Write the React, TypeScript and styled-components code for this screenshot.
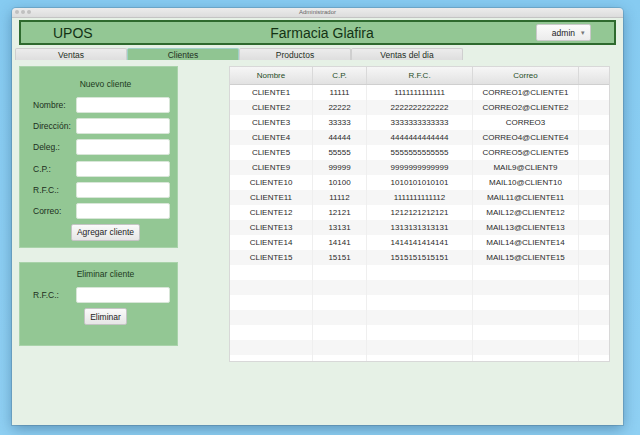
import React from "react";
import styled, { createGlobalStyle } from "styled-components";

const GlobalStyle = createGlobalStyle`
  html, body {
    margin: 0;
    padding: 0;
    height: 100%;
  }
  body {
    background: linear-gradient(180deg, #86cbf1 0%, #8fd0f3 100%);
    font-family: "Liberation Sans", Arial, sans-serif;
    overflow: hidden;
  }
  #root {
    height: 100%;
  }
`;

type Cliente = {
  nombre: string;
  cp: string;
  rfc: string;
  correo: string;
};

const clientes: Cliente[] = [
  { nombre: "CLIENTE1", cp: "11111", rfc: "1111111111111", correo: "CORREO1@CLIENTE1" },
  { nombre: "CLIENTE2", cp: "22222", rfc: "2222222222222", correo: "CORREO2@CLIENTE2" },
  { nombre: "CLIENTE3", cp: "33333", rfc: "3333333333333", correo: "CORREO3" },
  { nombre: "CLIENTE4", cp: "44444", rfc: "4444444444444", correo: "CORREO4@CLIENTE4" },
  { nombre: "CLIENTE5", cp: "55555", rfc: "5555555555555", correo: "CORREO5@CLIENTE5" },
  { nombre: "CLIENTE9", cp: "99999", rfc: "9999999999999", correo: "MAIL9@CLIENT9" },
  { nombre: "CLIENTE10", cp: "10100", rfc: "1010101010101", correo: "MAIL10@CLIENT10" },
  { nombre: "CLIENTE11", cp: "11112", rfc: "1111111111112", correo: "MAIL11@CLIENTE11" },
  { nombre: "CLIENTE12", cp: "12121", rfc: "1212121212121", correo: "MAIL12@CLIENTE12" },
  { nombre: "CLIENTE13", cp: "13131", rfc: "1313131313131", correo: "MAIL13@CLIENTE13" },
  { nombre: "CLIENTE14", cp: "14141", rfc: "1414141414141", correo: "MAIL14@CLIENTE14" },
  { nombre: "CLIENTE15", cp: "15151", rfc: "1515151515151", correo: "MAIL15@CLIENTE15" },
];

const tabs = ["Ventas", "Clientes", "Productos", "Ventas del dia"];
const campos = ["Nombre:", "Dirección:", "Deleg.:", "C.P.:", "R.F.C.:", "Correo:"];

export default function App() {
  return (
    <>
      <GlobalStyle />
      <Desktop>
        <Window>
          <TitleBar>
            <Dots>
              <Dot />
              <Dot />
              <Dot />
            </Dots>
            <WindowTitle>Administrador</WindowTitle>
          </TitleBar>
          <Content>
            <HeaderBar>
              <Brand>UPOS</Brand>
              <StoreName>Farmacia Glafira</StoreName>
              <UserButton>
                <span>admin</span>
                <Caret>▾</Caret>
              </UserButton>
            </HeaderBar>

            <TabRow>
              {tabs.map((t) => (
                <Tab key={t} $active={t === "Clientes"}>
                  {t}
                </Tab>
              ))}
            </TabRow>

            <Main>
              <SideColumn>
                <Panel $height={182} $top={12}>
                  <PanelTitle>Nuevo cliente</PanelTitle>
                  <FormGrid>
                    {campos.map((c) => (
                      <React.Fragment key={c}>
                        <FieldLabel>{c}</FieldLabel>
                        <TextInput />
                      </React.Fragment>
                    ))}
                  </FormGrid>
                  <ActionButton>Agregar cliente</ActionButton>
                </Panel>

                <Panel $height={84} $top={6}>
                  <PanelTitle>Eliminar cliente</PanelTitle>
                  <FormGrid>
                    <FieldLabel>R.F.C.:</FieldLabel>
                    <TextInput />
                  </FormGrid>
                  <ActionButton>Eliminar</ActionButton>
                </Panel>
              </SideColumn>

              <TableBox>
                <HeadRow>
                  <HeadCell>Nombre</HeadCell>
                  <HeadCell>C.P.</HeadCell>
                  <HeadCell>R.F.C.</HeadCell>
                  <HeadCell>Correo</HeadCell>
                  <HeadCell />
                </HeadRow>
                {clientes.map((c, i) => (
                  <Row key={c.nombre} $odd={i % 2 === 1}>
                    <Cell>{c.nombre}</Cell>
                    <Cell>{c.cp}</Cell>
                    <Cell>{c.rfc}</Cell>
                    <Cell>{c.correo}</Cell>
                    <Cell />
                  </Row>
                ))}
                {Array.from({ length: 7 }).map((_, i) => (
                  <Row key={"e" + i} $odd={(clientes.length + i) % 2 === 1}>
                    <Cell />
                    <Cell />
                    <Cell />
                    <Cell />
                    <Cell />
                  </Row>
                ))}
              </TableBox>
            </Main>
          </Content>
        </Window>
      </Desktop>
    </>
  );
}

const Desktop = styled.div`
  height: 100%;
  padding: 8px 0 0 12px;
  box-sizing: border-box;
`;

const Window = styled.div`
  width: 611px;
  height: 417px;
  display: flex;
  flex-direction: column;
  border-radius: 4px 4px 0 0;
  overflow: hidden;
  box-shadow: 0 4px 14px rgba(0, 40, 80, 0.35), 0 0 0 1px rgba(0, 0, 0, 0.12);
`;

const TitleBar = styled.div`
  height: 9px;
  flex: none;
  position: relative;
  display: flex;
  align-items: center;
  justify-content: center;
  background: linear-gradient(180deg, #ececec 0%, #dcdcdc 100%);
  border-bottom: 1px solid #c4c4c4;
`;

const Dots = styled.div`
  position: absolute;
  left: 3px;
  top: 2px;
  display: flex;
  gap: 2px;
`;

const Dot = styled.span`
  width: 4px;
  height: 4px;
  border-radius: 50%;
  background: #c0c0c0;
`;

const WindowTitle = styled.span`
  font-size: 6px;
  color: #666;
  line-height: 9px;
`;

const Content = styled.div`
  flex: 1;
  background: #e6f1e6;
  padding-top: 2px;
  display: flex;
  flex-direction: column;
`;

const HeaderBar = styled.div`
  margin: 0 7px;
  height: 25px;
  box-sizing: border-box;
  border: 2px solid #2e6a2e;
  background: #93c794;
  display: grid;
  grid-template-columns: 1fr auto 1fr;
  align-items: center;
  padding: 0 23px 0 32px;
`;

const Brand = styled.div`
  font-size: 14px;
  color: #143314;
  justify-self: start;
`;

const StoreName = styled.div`
  font-size: 14px;
  color: #143314;
`;

const UserButton = styled.div`
  justify-self: end;
  width: 55px;
  height: 17px;
  box-sizing: border-box;
  border: 1px solid #c9c9c9;
  border-radius: 2px;
  background: linear-gradient(180deg, #fbfbfb 0%, #ececec 100%);
  display: flex;
  align-items: center;
  justify-content: flex-end;
  gap: 6px;
  padding-right: 5px;
  font-size: 8.5px;
  color: #222;
`;

const Caret = styled.span`
  font-size: 7px;
  color: #777;
`;

const TabRow = styled.div`
  display: flex;
  margin: 3px 0 0 3px;
  height: 12px;
`;

const Tab = styled.div<{ $active?: boolean }>`
  width: 112px;
  box-sizing: border-box;
  display: flex;
  align-items: center;
  justify-content: center;
  font-size: 8.5px;
  color: #1f2f1f;
  border: 1px solid ${(p) => (p.$active ? "#9fd0c6" : "#cfcfcf")};
  border-bottom: none;
  border-radius: 2px 2px 0 0;
  background: ${(p) =>
    p.$active ? "#90c592" : "linear-gradient(180deg, #ececec 0%, #dedede 100%)"};
`;

const Main = styled.div`
  display: flex;
  align-items: flex-start;
  gap: 51px;
  padding: 6px 13px 0 7px;
`;

const SideColumn = styled.div`
  width: 159px;
  flex: none;
  display: flex;
  flex-direction: column;
  gap: 14px;
`;

const Panel = styled.div<{ $height: number; $top: number }>`
  height: ${(p) => p.$height}px;
  box-sizing: border-box;
  background: #93c794;
  border: 1px solid #a9d3aa;
  display: flex;
  flex-direction: column;
  align-items: center;
  padding: ${(p) => p.$top}px 7px 0 13px;
`;

const PanelTitle = styled.div`
  font-size: 8.5px;
  color: #1c3a1c;
  line-height: 11px;
  margin-bottom: 7px;
  padding-left: 8px;
`;

const FormGrid = styled.div`
  align-self: stretch;
  display: grid;
  grid-template-columns: 43px 1fr;
  row-gap: 5.2px;
  align-items: center;
`;

const FieldLabel = styled.div`
  font-size: 8.5px;
  color: #1c2e1c;
`;

const TextInput = styled.div`
  height: 16px;
  box-sizing: border-box;
  background: #fff;
  border: 1px solid #d8e6d8;
  border-radius: 2px;
`;

const ActionButton = styled.div`
  margin-top: 5px;
  height: 17px;
  padding: 0 5px;
  box-sizing: border-box;
  display: flex;
  align-items: center;
  border: 1px solid #c4c4c4;
  border-radius: 2px;
  background: linear-gradient(180deg, #fafafa 0%, #e6e6e6 100%);
  font-size: 8.5px;
  color: #222;
  margin-left: 8px;
`;

const TableBox = styled.div`
  flex: 1;
  height: 296px;
  box-sizing: border-box;
  border: 1px solid #d8d8d8;
  background: #fff;
  overflow: hidden;
`;

const columns = "83px 54px 106px 106px 1fr";

const HeadRow = styled.div`
  display: grid;
  grid-template-columns: ${columns};
  height: 17px;
  background: linear-gradient(180deg, #f6f6f6 0%, #e2e2e2 100%);
  border-bottom: 1px solid #cfcfcf;
`;

const HeadCell = styled.div`
  display: flex;
  align-items: center;
  justify-content: center;
  font-size: 8px;
  color: #264d26;
  border-right: 1px solid #d9d9d9;
  &:last-child {
    border-right: none;
  }
`;

const Row = styled.div<{ $odd?: boolean }>`
  display: grid;
  grid-template-columns: ${columns};
  height: 15px;
  background: ${(p) => (p.$odd ? "#f6f6f6" : "#ffffff")};
`;

const Cell = styled.div`
  display: flex;
  align-items: center;
  justify-content: center;
  font-size: 8px;
  color: #2a2a2a;
  border-right: 1px solid #efefef;
  white-space: nowrap;
  &:last-child {
    border-right: none;
  }
`;
